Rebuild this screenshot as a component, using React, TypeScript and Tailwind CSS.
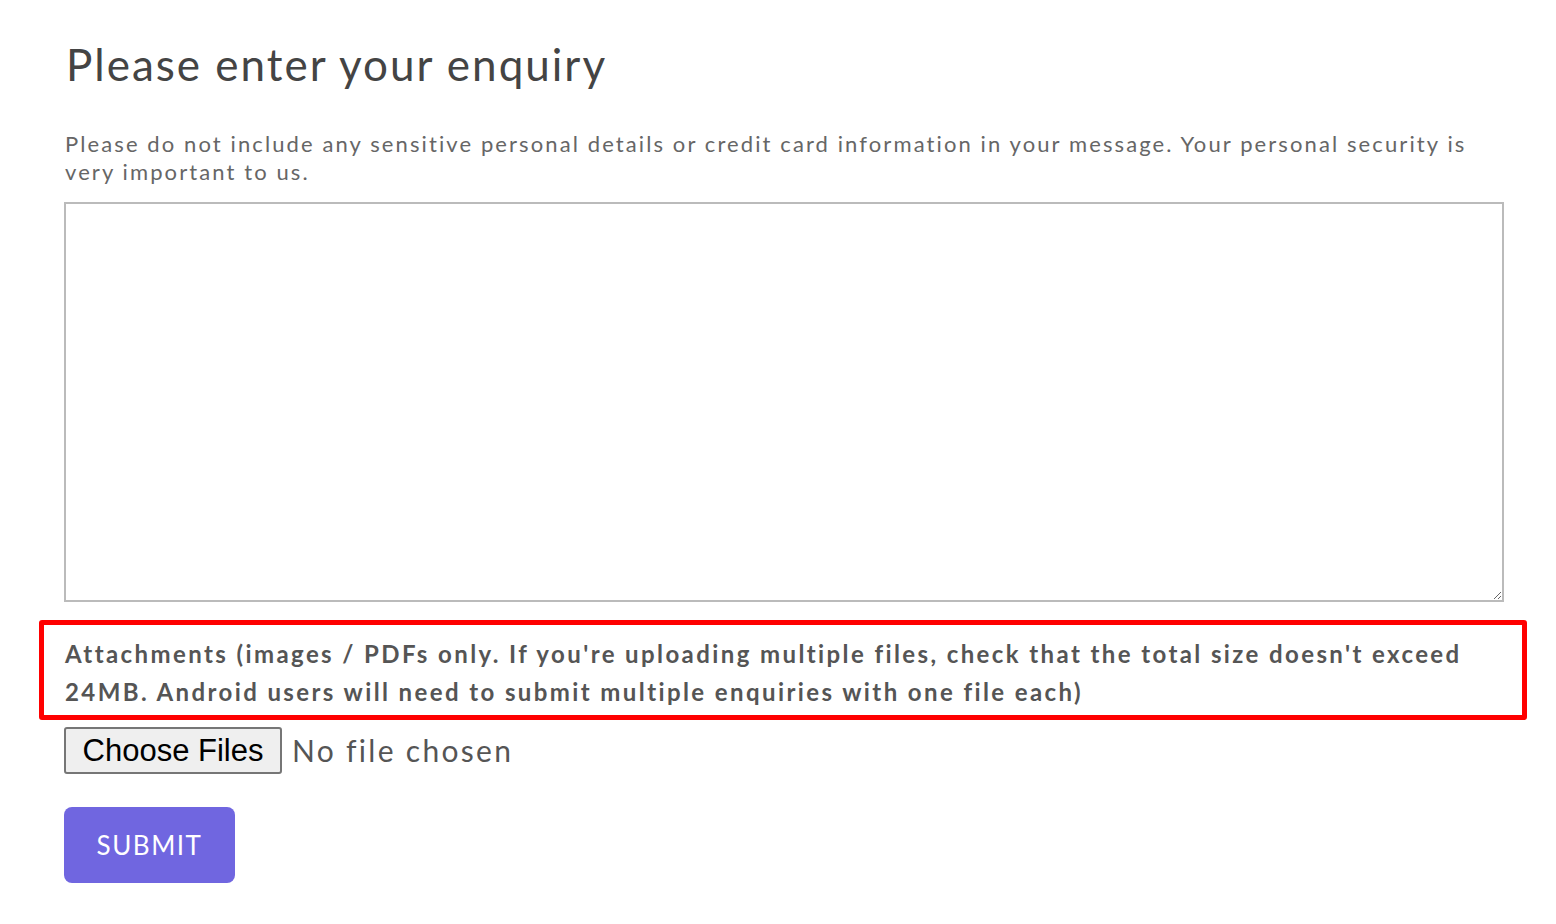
import React from 'react';

const font = { fontFamily: 'Lato, "Open Sans", sans-serif' };

export default function App() {
  return (
    <div className="min-h-screen bg-white" style={font}>
      <form className="w-[1440px] ml-[64px] pt-[38px]" onSubmit={(e) => e.preventDefault()}>
        {/* Heading */}
        <h1 className="text-[44px] leading-[52px] text-[#444] tracking-[2px] font-normal pl-[2px]">
          Please enter your enquiry
        </h1>

        {/* Notice */}
        <p className="mt-[40px] text-[22px] leading-[28px] text-[#666] tracking-[2.1px] pl-[1px]">
          Please do not include any sensitive personal details or credit card information in your message. Your personal security is very important to us.
        </p>

        {/* Message box */}
        <textarea
          className="mt-[16px] block w-[1440px] h-[400px] border-2 border-[#bbb] outline-none resize p-3 text-[20px] text-[#444]"
        />

        {/* Attachments label */}
        <div className="mt-[18px] ml-[-25px] w-[1488px] h-[100px] border-[5px] border-[#ff0000] rounded-[3px] pl-[21px] pr-[20px] pt-[10px]">
          <p className="text-[24px] leading-[38px] font-bold text-[#555] tracking-[2.4px]">
            Attachments (images / PDFs only. If you're uploading multiple files, check that the total size doesn't exceed 24MB. Android users will need to submit multiple enquiries with one file each)
          </p>
        </div>

        {/* File picker */}
        <div className="mt-[7px] flex items-center gap-[10px]">
          <button
            type="button"
            className="h-[47px] w-[218px] bg-[#efefef] border-2 border-[#767676] rounded-[3px] text-[31px] leading-none text-black"
            style={{ fontFamily: '"Liberation Sans", Arial, sans-serif' }}
          >
            Choose Files
          </button>
          <span className="text-[30px] text-[#555] tracking-[2.3px]">No file chosen</span>
        </div>

        {/* Submit */}
        <button
          type="submit"
          className="mt-[33px] w-[171px] h-[76px] rounded-[8px] bg-[#7066e0] text-white text-[26px] tracking-[1.5px]"
        >
          SUBMIT
        </button>
      </form>
    </div>
  );
}
